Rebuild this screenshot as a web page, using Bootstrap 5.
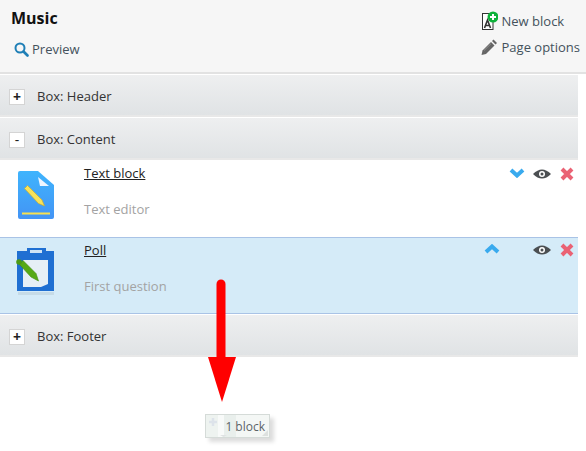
<!DOCTYPE html>
<html lang="en">
<head>
  <meta charset="UTF-8">
  <title>Music</title>
  <link href="https://cdn.jsdelivr.net/npm/bootstrap@5.3.0/dist/css/bootstrap.min.css" rel="stylesheet">
  <style>
    html, body { height: 451px; overflow: hidden; }
    body { font-family: "Open Sans", sans-serif; font-size: 13px; color: #333; background: #fff; position: relative; }
    .page-head { height: 74px; background: #f6f6f6; border-bottom: 2px solid #e2e2e2; padding: 8px 6px 0 11px; }
    .page-title { font-size: 16px; font-weight: 700; color: #111; line-height: 20px; margin: 0; }
    .head-link { color: #44525c; line-height: 18px; }
    .preview-link { margin: 12px 0 0 3px; gap: 3px; }
    .head-actions { padding-top: 3px; gap: 8px; }
    .box-wrap { width: 578px; }
    .box-bar { height: 42px; margin-top: 1px; padding: 3px 0 0 9px; background: linear-gradient(#eeeff0, #e0e3e5); border-bottom: 2px solid #e8e8e8; color: #333; }
    .toggle-btn { width: 16px; height: 16px; background: #fff; border: 1px solid #d4d4d4; font-weight: 700; font-size: 14px; line-height: 13px; text-align: center; margin-right: 12px; color: #222; }
    .toggle-open { font-weight: 400; }
    .block-row { height: 77px; padding-right: 4px; }
    .block-poll { background: #d5ebf8; border-top: 1px solid #a9c3e6; border-bottom: 1px solid #a9c3e6; }
    .block-icon { width: 84px; padding-left: 15px; padding-top: 10px; flex: none; }
    .block-poll .block-icon { padding-top: 9px; }
    .block-name { color: #222; text-decoration: underline; line-height: 18px; display: block; margin-top: 4px; }
    .block-poll .block-name { margin-top: 3px; }
    .block-desc { color: #a3a3a3; line-height: 18px; margin-top: 18px; }
    .block-tools { margin-left: auto; padding-top: 8px; gap: 8px; }
    .block-poll .block-tools { padding-top: 6px; }
    .tool-close { margin-top: -1px; margin-left: 1px; }
    .tool-gap { width: 17px; }
    .drag-arrow { position: absolute; left: 207px; top: 279px; }
    .drag-chip { position: absolute; left: 205px; top: 414px; width: 65px; height: 24px; background: linear-gradient(90deg, #eef3f0 0 12px, #f8faf9 12px 18px, #e9efec 18px 30px, #f4f7f5 30px); border: 1px solid #d5dbd8; box-shadow: 4px 4px 4px #ddd; color: #5c6468; font-size: 12px; line-height: 24px; text-align: right; padding-right: 4px; }
    .chip-marks { position: absolute; left: 0; top: 0; }
  </style>
</head>
<body>
  <div class="page-head d-flex justify-content-between">
    <div>
      <h1 class="page-title">Music</h1>
      <div class="preview-link head-link d-flex align-items-center">
        <svg width="15" height="15" viewBox="0 0 15 15"><circle cx="6" cy="6" r="4.5" fill="none" stroke="#1f7fb6" stroke-width="2"/><path d="M9.5 9.5 13.5 13.5" stroke="#1f7fb6" stroke-width="2.6" stroke-linecap="round"/></svg>
        <span>Preview</span>
      </div>
    </div>
    <div class="head-actions d-flex flex-column">
      <div class="head-link d-flex align-items-center gap-1">
        <svg width="19" height="19" viewBox="0 0 19 19"><rect x="3.500" y="2.500" width="10.500" height="16" fill="#fff" stroke="#333"/><path d="M5.500 17 8.500 9 11.500 17M6.600 14.500H10.400" fill="none" stroke="#333" stroke-width="1.600"/><circle cx="14" cy="6" r="5.500" fill="#0eb23a"/><path d="M14 3v6M11 6h6" stroke="#fff" stroke-width="2"/></svg>
        <span>New block</span>
      </div>
      <div class="head-link d-flex align-items-center gap-1">
        <svg width="19" height="16" viewBox="0 0 19 16"><path d="M2.500 16 3.500 11.500 12 3 15.500 6.500 7 15Z" fill="#666"/><path d="M13 2 14.500.5 18 4 16.500 5.500Z" fill="#666"/><path d="M5 11.500 12 4.700" stroke="#999" stroke-width=".8"/></svg>
        <span>Page options</span>
      </div>
    </div>
  </div>

  <div class="box-wrap">
    <div class="box-bar d-flex align-items-center"><div class="toggle-btn">+</div><span>Box: Header</span></div>
    <div class="box-bar d-flex align-items-center"><div class="toggle-btn toggle-open">-</div><span>Box: Content</span></div>

    <div class="block-row d-flex">
      <div class="block-icon">
        <svg width="40" height="50" viewBox="0 0 40 50"><defs><linearGradient id="docFill" x1="0" y1="0" x2="0" y2="1"><stop offset="0" stop-color="#3fb4fd"/><stop offset="1" stop-color="#4394f5"/></linearGradient></defs><path d="M5 1H23L39 15V47Q39 49 37 49H5Q3 49 3 47V3Q3 1 5 1Z" fill="url(#docFill)"/><path d="M23 7 34 16H25Z" fill="#eef6ff"/><path d="M11 16 14.500 20 29.500 36.500 24 34 10 19Z" fill="#2f7fd0" opacity=".35"/><path d="M9.500 18.500 12.500 15.500 27 30 29.500 36 23.500 33.500Z" fill="#f8e25a" stroke="#cdb02f" stroke-width=".7"/><path d="M7 43.500H35" stroke="#f8e04e" stroke-width="2"/></svg>
      </div>
      <div>
        <a class="block-name" href="#">Text block</a>
        <div class="block-desc">Text editor</div>
      </div>
      <div class="block-tools d-flex align-items-start">
        <svg width="16" height="10" viewBox="0 0 16 10"><path d="M2 2 8 7.500 14 2" fill="none" stroke="#39aaee" stroke-width="4"/></svg>
        <svg width="18" height="12" viewBox="0 0 18 12"><path d="M0 6Q9 -3 18 6 9 15 0 6Z" fill="#4b4f52"/><circle cx="9" cy="6" r="3" fill="#fff"/><circle cx="9" cy="6" r="1.500" fill="#4b4f52"/></svg>
        <svg class="tool-close" width="14" height="14" viewBox="0 0 14 14"><path d="M2 2 12 12M12 2 2 12" stroke="#ea6274" stroke-width="4"/></svg>
      </div>
    </div>

    <div class="block-row block-poll d-flex">
      <div class="block-icon">
        <svg width="42" height="50" viewBox="0 0 42 50"><path d="M2 4H12V1H31V4H39V44H2Z" fill="#1f6fd2"/><rect x="15" y="3" width="12" height="3" fill="#cfe3f5"/><path d="M8 13H33V37L26 40H8Z" fill="#e6eff6"/><rect x="3" y="45" width="36" height="3" fill="#bcd0dc" opacity=".6"/><path d="M4.500 17.500 8 13.500 21 26.500 23.500 34 16 30Z" fill="#56a916" stroke="#3f8c10" stroke-width=".6"/><circle cx="4" cy="15" r="2.800" fill="#4c9a14"/></svg>
      </div>
      <div>
        <a class="block-name" href="#">Poll</a>
        <div class="block-desc">First question</div>
      </div>
      <div class="block-tools d-flex align-items-start">
        <svg width="16" height="10" viewBox="0 0 16 10"><path d="M2 8 8 2.500 14 8" fill="none" stroke="#39aaee" stroke-width="4"/></svg>
        <div class="tool-gap"></div>
        <svg width="18" height="12" viewBox="0 0 18 12"><path d="M0 6Q9 -3 18 6 9 15 0 6Z" fill="#4b4f52"/><circle cx="9" cy="6" r="3" fill="#fff"/><circle cx="9" cy="6" r="1.500" fill="#4b4f52"/></svg>
        <svg class="tool-close" width="14" height="14" viewBox="0 0 14 14"><path d="M2 2 12 12M12 2 2 12" stroke="#ea6274" stroke-width="4"/></svg>
      </div>
    </div>

    <div class="box-bar d-flex align-items-center"><div class="toggle-btn">+</div><span>Box: Footer</span></div>
  </div>

  <svg class="drag-arrow" width="30" height="124" viewBox="0 0 30 124"><path d="M14 5V80" stroke="#f00" stroke-width="9" stroke-linecap="round"/><path d="M1 78H29L15 123Z" fill="#f00"/></svg>
  <div class="drag-chip">
    <svg class="chip-marks" width="63" height="22" viewBox="0 0 63 22"><path d="M3 7H11M7 3V11" stroke="#dde3ea" stroke-width="2.500"/><path d="M14 20H21L17.500 22Z" fill="#dfe2e3"/><path d="M62 15V21H56Z" fill="#dde1df"/></svg>
    1 block
  </div>
</body>
</html>
